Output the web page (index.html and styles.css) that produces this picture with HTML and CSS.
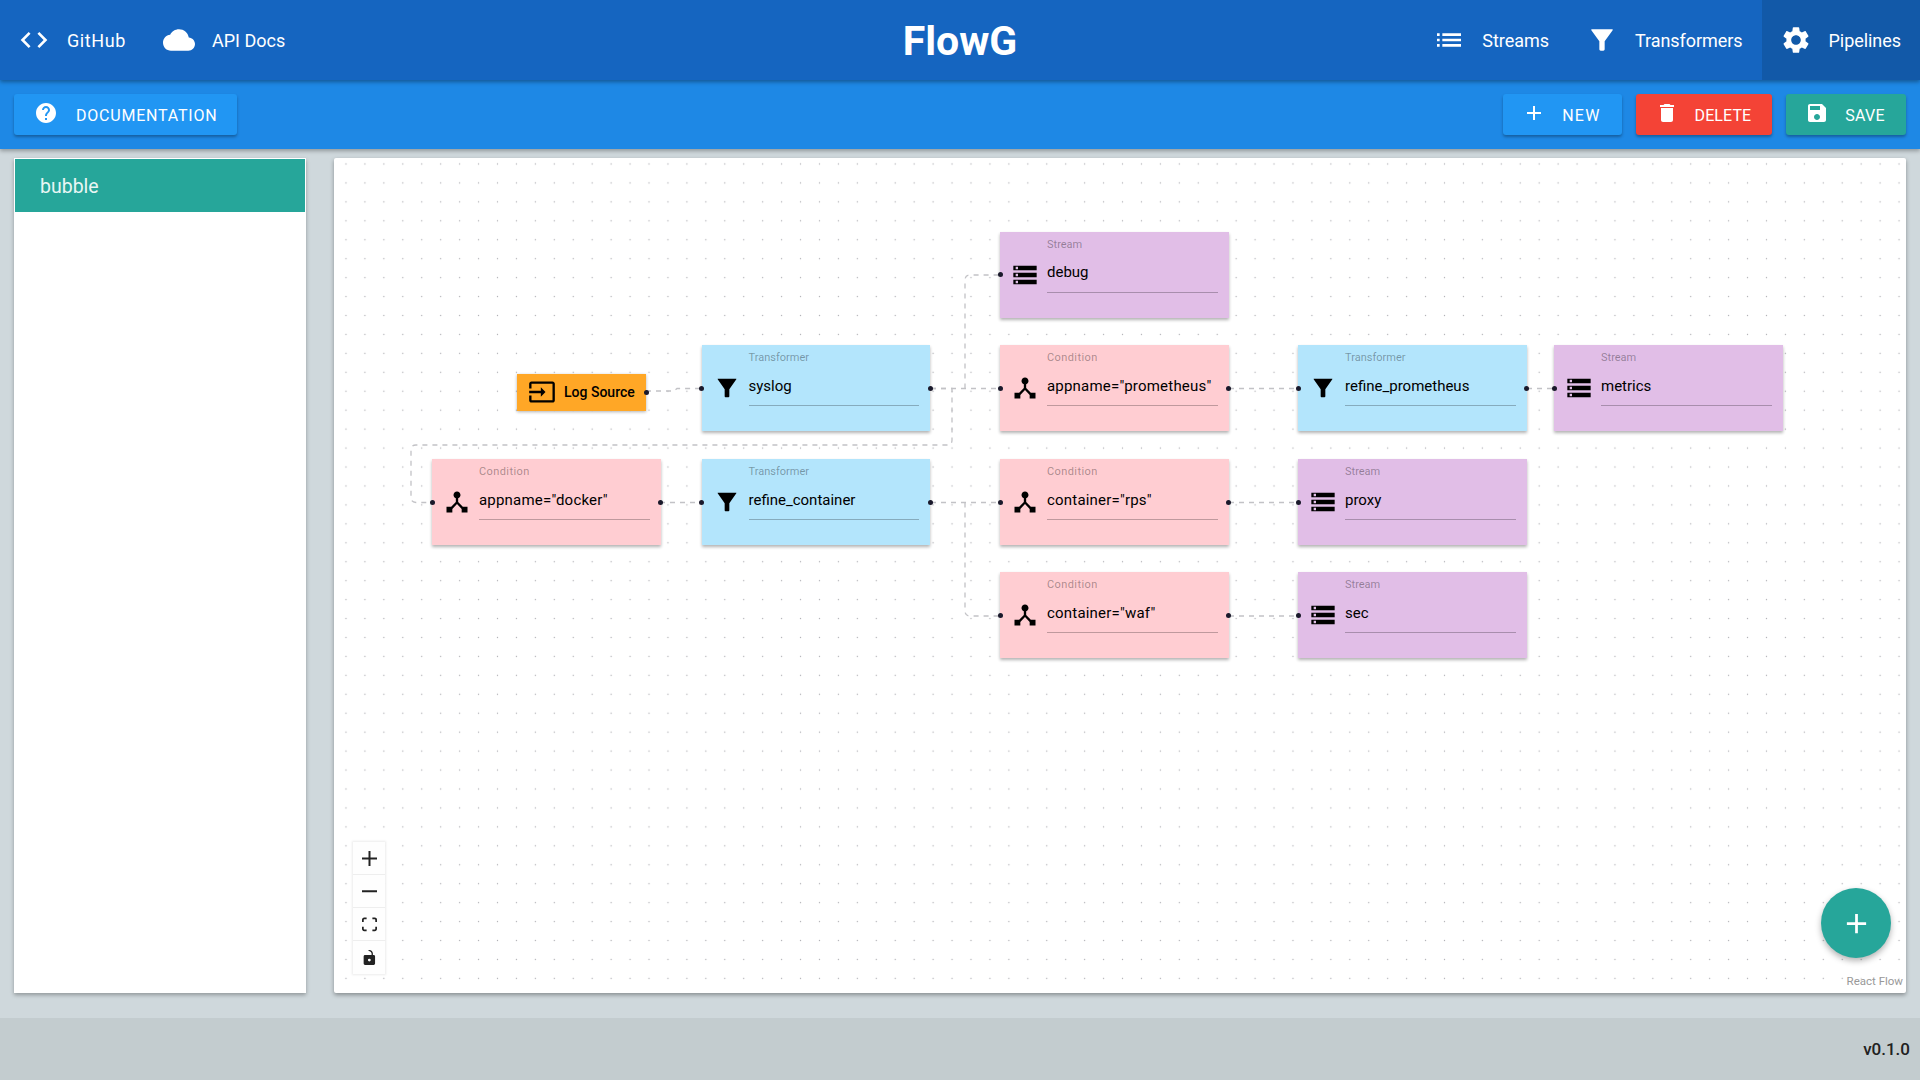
FILE: index.html
```html
<!DOCTYPE html>
<html lang="en">
<head>
  <meta charset="UTF-8" />
  <title>FlowG</title>
  <link rel="stylesheet" href="styles.css">
</head>
<body>
  <!-- icon sprite -->
  <svg class="sprite" xmlns="http://www.w3.org/2000/svg">
    <symbol id="i-code" viewBox="0 0 24 24"><path d="M9.4 16.6L4.8 12l4.6-4.6L8 6l-6 6 6 6 1.4-1.4zm5.2 0l4.6-4.6-4.6-4.6L16 6l6 6-6 6-1.4-1.4z"/></symbol>
    <symbol id="i-cloud" viewBox="0 0 24 24"><path d="M19.35 10.04C18.67 6.59 15.64 4 12 4 9.11 4 6.6 5.64 5.35 8.04 2.34 8.36 0 10.91 0 14c0 3.31 2.69 6 6 6h13c2.76 0 5-2.24 5-5 0-2.64-2.05-4.78-4.65-4.96z"/></symbol>
    <symbol id="i-list" viewBox="0 0 24 24"><path d="M3 13h2v-2H3v2zm0 4h2v-2H3v2zm0-8h2V7H3v2zm4 4h14v-2H7v2zm0 4h14v-2H7v2zM7 7v2h14V7H7z"/></symbol>
    <symbol id="i-filter" viewBox="0 0 24 24"><path d="M4 4h16v.6L14 13v6c0 .55-.45 1-1 1h-2c-.55 0-1-.45-1-1v-6L4 4.6z"/></symbol>
    <symbol id="i-gear" viewBox="0 0 24 24"><path d="M19.14 12.94c.04-.3.06-.61.06-.94 0-.32-.02-.64-.07-.94l2.03-1.58c.18-.14.23-.41.12-.61l-1.92-3.32c-.12-.22-.37-.29-.59-.22l-2.39.96c-.5-.38-1.03-.7-1.62-.94l-.36-2.54c-.04-.24-.24-.41-.48-.41h-3.84c-.24 0-.43.17-.47.41l-.36 2.54c-.59.24-1.13.57-1.62.94l-2.39-.96c-.22-.08-.47 0-.59.22L2.74 8.87c-.12.21-.08.47.12.61l2.03 1.58c-.05.3-.09.63-.09.94s.02.64.07.94l-2.03 1.58c-.18.14-.23.41-.12.61l1.92 3.32c.12.22.37.29.59.22l2.39-.96c.5.38 1.03.7 1.62.94l.36 2.54c.05.24.24.41.48.41h3.84c.24 0 .44-.17.47-.41l.36-2.54c.59-.24 1.13-.56 1.62-.94l2.39.96c.22.08.47 0 .59-.22l1.92-3.32c.12-.22.07-.47-.12-.61l-2.01-1.58zM12 15.6c-1.98 0-3.6-1.62-3.6-3.6s1.62-3.6 3.6-3.6 3.6 1.62 3.6 3.6-1.62 3.6-3.6 3.6z"/></symbol>
    <symbol id="i-help" viewBox="0 0 24 24"><path d="M12 2C6.48 2 2 6.48 2 12s4.48 10 10 10 10-4.48 10-10S17.52 2 12 2zm1 17h-2v-2h2v2zm2.07-7.75l-.9.92C13.45 12.9 13 13.5 13 15h-2v-.5c0-1.1.45-2.1 1.17-2.83l1.24-1.26c.37-.36.59-.86.59-1.41 0-1.1-.9-2-2-2s-2 .9-2 2H8c0-2.21 1.79-4 4-4s4 1.79 4 4c0 .88-.36 1.68-.93 2.25z"/></symbol>
    <symbol id="i-add" viewBox="0 0 24 24"><path d="M19 13h-6v6h-2v-6H5v-2h6V5h2v6h6v2z"/></symbol>
    <symbol id="i-delete" viewBox="0 0 24 24"><path d="M6 19c0 1.1.9 2 2 2h8c1.1 0 2-.9 2-2V7H6v12zM19 4h-3.5l-1-1h-5l-1 1H5v2h14V4z"/></symbol>
    <symbol id="i-save" viewBox="0 0 24 24"><path d="M17 3H5c-1.11 0-2 .9-2 2v14c0 1.1.89 2 2 2h14c1.1 0 2-.9 2-2V7l-4-4zm-5 16c-1.66 0-3-1.34-3-3s1.34-3 3-3 3 1.34 3 3-1.34 3-3 3zm3-10H5V5h10v4z"/></symbol>
    <symbol id="i-storage" viewBox="0 0 24 24"><path d="M2 20h20v-4H2v4zm2-3h2v2H4v-2zM2 4v4h20V4H2zm4 3H4V5h2v2zm-4 7h20v-4H2v4zm2-3h2v2H4v-2z"/></symbol>
    <symbol id="i-hub" viewBox="0 0 24 24"><path d="M17 16l-4-4V8.82C14.16 8.4 15 7.3 15 6c0-1.66-1.34-3-3-3S9 4.34 9 6c0 1.3.84 2.4 2 2.82V12l-4 4H3v5h5v-3.05l4-4.2 4 4.2V21h5v-5h-4z"/></symbol>
    <symbol id="i-input" viewBox="0 0 24 24"><path d="M21 3.01H3c-1.1 0-2 .9-2 2V9h2V4.99h18v14.03H3V15H1v4.01c0 1.1.9 1.98 2 1.98h18c1.1 0 2-.88 2-1.98v-14c0-1.11-.9-2-2-2zM11 16l4-4-4-4v3H1v2h10v3z"/></symbol>
    <symbol id="i-zoom-in" viewBox="0 0 32 32"><path d="M32 18.133H18.133V32h-4.266V18.133H0v-4.266h13.867V0h4.266v13.867H32z"/></symbol>
    <symbol id="i-zoom-out" viewBox="0 0 32 5"><path d="M0 0h32v4.2H0z"/></symbol>
    <symbol id="i-fit" viewBox="0 0 32 30"><path d="M3.692 4.63c0-.53.4-.938.939-.938h5.215V0H4.708C2.13 0 0 2.054 0 4.63v5.216h3.692V4.631zM27.354 0h-5.2v3.692h5.17c.53 0 .984.4.984.939v5.215H32V4.631A4.624 4.624 0 0027.354 0zm.954 24.83c0 .532-.4.94-.939.94h-5.215v3.768h5.215c2.577 0 4.631-2.13 4.631-4.707v-5.139h-3.692v5.139zm-23.677.94c-.531 0-.939-.4-.939-.94v-5.138H0v5.139c0 2.577 2.13 4.707 4.708 4.707h5.138V25.77H4.631z"/></symbol>
    <symbol id="i-unlock" viewBox="0 0 25 32"><path d="M21.333 10.667H19.81V7.619C19.81 3.429 16.38 0 12.19 0c-4.114 0-1.37 2.133.305 2.438 1.676.305 4.42 2.59 4.42 5.181v3.048H3.047A3.056 3.056 0 000 13.714v15.238A3.056 3.056 0 003.048 32h18.285a3.056 3.056 0 003.048-3.048V13.714a3.056 3.056 0 00-3.048-3.047zM12.19 24.533a3.056 3.056 0 01-3.047-3.047 3.056 3.056 0 013.047-3.048 3.056 3.056 0 013.048 3.048 3.056 3.056 0 01-3.048 3.047z"/></symbol>
  </svg>

  <header class="appbar">
    <nav class="nav">
      <a class="nav-item nav-github" href="#"><svg class="nav-icon"><use href="#i-code"/></svg>GitHub</a>
      <a class="nav-item" href="#"><svg class="nav-icon"><use href="#i-cloud"/></svg>API Docs</a>
    </nav>
    <h1 class="brand">FlowG</h1>
    <nav class="nav nav-right">
      <a class="nav-item" href="#"><svg class="nav-icon"><use href="#i-list"/></svg>Streams</a>
      <a class="nav-item" href="#"><svg class="nav-icon"><use href="#i-filter"/></svg>Transformers</a>
      <a class="nav-item active" href="#"><svg class="nav-icon"><use href="#i-gear"/></svg>Pipelines</a>
    </nav>
  </header>

  <div class="toolbar">
    <a class="btn btn-blue btn-doc" href="#"><svg class="btn-icon"><use href="#i-help"/></svg><span class="btn-label">Documentation</span></a>
    <div class="toolbar-actions">
      <a class="btn btn-blue btn-new" href="#"><svg class="btn-icon"><use href="#i-add"/></svg><span class="btn-label">New</span></a>
      <a class="btn btn-red btn-delete" href="#"><svg class="btn-icon"><use href="#i-delete"/></svg><span class="btn-label">Delete</span></a>
      <a class="btn btn-teal btn-save" href="#"><svg class="btn-icon"><use href="#i-save"/></svg><span class="btn-label">Save</span></a>
    </div>
  </div>

  <main class="workspace">
    <aside class="sidebar">
      <a class="sidebar-item selected" href="#">bubble</a>
    </aside>

    <section class="canvas">
      <svg class="edges" xmlns="http://www.w3.org/2000/svg">
        <defs>
          <pattern id="dots" x="2.5" y="-3.5" width="18.94" height="18.94" patternUnits="userSpaceOnUse">
            <circle cx="9.47" cy="9.47" r="0.7" fill="#b0b0b5"/>
          </pattern>
        </defs>
        <rect width="100%" height="100%" fill="url(#dots)"/>
        <g class="edge-lines">
          <path d="M312 233H340L343 230.5H368"/>
          <path d="M597 230.5H666"/>
          <path d="M631 230.5V122Q631 117 636 117H666"/>
          <path d="M597 230.5H618V282Q618 287 613 287H82Q77 287 77 292V339.5Q77 344.5 82 344.5H97"/>
          <path d="M326 344.5H368"/>
          <path d="M597 344.5H666"/>
          <path d="M631 344.5V453Q631 458 636 458H666"/>
          <path d="M895 230.5H964"/>
          <path d="M895 344.5H964"/>
          <path d="M895 458H964"/>
          <path d="M1193 230.5H1220"/>
        </g>
      </svg>

      <div class="node-source">
        <svg class="node-icon"><use href="#i-input"/></svg>
        <span>Log Source</span>
        <i class="handle handle-right"></i>
      </div>

      <div class="node stream col-3 row-1">
        <i class="handle handle-left"></i>
        <svg class="node-icon"><use href="#i-storage"/></svg>
        <div class="node-body"><div class="node-type">Stream</div><div class="node-name">debug</div></div>
      </div>

      <div class="node transformer col-2 row-2">
        <i class="handle handle-left"></i>
        <svg class="node-icon"><use href="#i-filter"/></svg>
        <div class="node-body"><div class="node-type">Transformer</div><div class="node-name">syslog</div></div>
        <i class="handle handle-right"></i>
      </div>
      <div class="node condition col-3 row-2">
        <i class="handle handle-left"></i>
        <svg class="node-icon"><use href="#i-hub"/></svg>
        <div class="node-body"><div class="node-type">Condition</div><div class="node-name">appname="prometheus"</div></div>
        <i class="handle handle-right"></i>
      </div>
      <div class="node transformer col-4 row-2">
        <i class="handle handle-left"></i>
        <svg class="node-icon"><use href="#i-filter"/></svg>
        <div class="node-body"><div class="node-type">Transformer</div><div class="node-name">refine_prometheus</div></div>
        <i class="handle handle-right"></i>
      </div>
      <div class="node stream col-5 row-2">
        <i class="handle handle-left"></i>
        <svg class="node-icon"><use href="#i-storage"/></svg>
        <div class="node-body"><div class="node-type">Stream</div><div class="node-name">metrics</div></div>
      </div>

      <div class="node condition col-1 row-3">
        <i class="handle handle-left"></i>
        <svg class="node-icon"><use href="#i-hub"/></svg>
        <div class="node-body"><div class="node-type">Condition</div><div class="node-name">appname="docker"</div></div>
        <i class="handle handle-right"></i>
      </div>
      <div class="node transformer col-2 row-3">
        <i class="handle handle-left"></i>
        <svg class="node-icon"><use href="#i-filter"/></svg>
        <div class="node-body"><div class="node-type">Transformer</div><div class="node-name">refine_container</div></div>
        <i class="handle handle-right"></i>
      </div>
      <div class="node condition col-3 row-3">
        <i class="handle handle-left"></i>
        <svg class="node-icon"><use href="#i-hub"/></svg>
        <div class="node-body"><div class="node-type">Condition</div><div class="node-name">container="rps"</div></div>
        <i class="handle handle-right"></i>
      </div>
      <div class="node stream col-4 row-3">
        <i class="handle handle-left"></i>
        <svg class="node-icon"><use href="#i-storage"/></svg>
        <div class="node-body"><div class="node-type">Stream</div><div class="node-name">proxy</div></div>
      </div>

      <div class="node condition col-3 row-4">
        <i class="handle handle-left"></i>
        <svg class="node-icon"><use href="#i-hub"/></svg>
        <div class="node-body"><div class="node-type">Condition</div><div class="node-name">container="waf"</div></div>
        <i class="handle handle-right"></i>
      </div>
      <div class="node stream col-4 row-4">
        <i class="handle handle-left"></i>
        <svg class="node-icon"><use href="#i-storage"/></svg>
        <div class="node-body"><div class="node-type">Stream</div><div class="node-name">sec</div></div>
      </div>

      <div class="controls">
        <button class="control"><svg class="control-icon"><use href="#i-zoom-in"/></svg></button>
        <button class="control"><svg class="control-icon"><use href="#i-zoom-out"/></svg></button>
        <button class="control"><svg class="control-icon"><use href="#i-fit"/></svg></button>
        <button class="control"><svg class="control-icon"><use href="#i-unlock"/></svg></button>
      </div>

      <button class="fab"><svg class="fab-icon"><use href="#i-add"/></svg></button>
      <a class="attribution" href="#">React Flow</a>
    </section>
  </main>

  <footer class="footer">v0.1.0</footer>
</body>
</html>
```

FILE: styles.css
```css
* {
  box-sizing: border-box;
}

body {
  margin: 0;
  height: 100vh;
  display: flex;
  flex-direction: column;
  overflow: hidden;
  background-color: #cfd8dc;
  color: #000;
  font-family: Roboto, "Liberation Sans", sans-serif;
}

a {
  color: inherit;
  text-decoration: none;
}

.sprite {
  display: none;
}

svg {
  fill: currentColor;
}

/* App bar */
.appbar {
  height: 80px;
  flex-shrink: 0;
  display: grid;
  grid-template-columns: 1fr auto 1fr;
  align-items: stretch;
  background-color: #1565c0;
  color: #fff;
  box-shadow: 0 2px 4px rgba(0, 0, 0, 0.35);
  position: relative;
  z-index: 3;
}

.nav {
  display: flex;
}

.nav-right {
  justify-content: flex-end;
  letter-spacing: -0.05px;
}

.nav-item {
  display: flex;
  align-items: center;
  gap: 17px;
  padding: 0 19px 0 18px;
  font-size: 18px;
}

.nav-github {
  letter-spacing: 0.6px;
}

.nav-item.active {
  background-color: #1259a8;
}

.nav-icon {
  width: 32px;
  height: 32px;
}

.brand {
  margin: 1px 0 0;
  align-self: center;
  font-size: 41px;
  font-weight: 700;
}

/* Toolbar */
.toolbar {
  height: 69px;
  flex-shrink: 0;
  display: flex;
  justify-content: space-between;
  align-items: center;
  padding: 0 14px;
  background-color: #1e88e5;
  box-shadow: 0 2px 4px rgba(0, 0, 0, 0.3);
  position: relative;
  z-index: 2;
}

.toolbar-actions {
  display: flex;
  gap: 14px;
}

.btn {
  height: 41px;
  display: flex;
  align-items: center;
  gap: 16px;
  padding: 0 21px 0 19px;
  border-radius: 3px;
  color: #fff;
  font-size: 16px;
  letter-spacing: 0.5px;
  text-transform: uppercase;
  box-shadow: 0 2px 3px rgba(0, 0, 0, 0.3);
}

.btn-label {
  margin-top: 1px;
}

.btn-doc {
  gap: 18px;
  padding: 0 20px;
  letter-spacing: 0.78px;
}

.btn-new {
  letter-spacing: 1.2px;
}

.btn-delete {
  letter-spacing: 0.1px;
}

.btn-save {
  letter-spacing: 0.3px;
}

.btn-blue {
  background-color: #2196f3;
}

.btn-red {
  background-color: #f44336;
}

.btn-teal {
  background-color: #26a69a;
}

.btn-icon {
  width: 24px;
  height: 24px;
  margin-top: -3px;
}

/* Workspace */
.workspace {
  flex: 1;
  display: flex;
  gap: 28px;
  padding: 9px 14px 25px;
  min-height: 0;
}

.sidebar {
  width: 292px;
  flex-shrink: 0;
  padding: 1px;
  background-color: #fff;
  box-shadow: 0 2px 4px rgba(0, 0, 0, 0.3);
}

.sidebar-item {
  display: flex;
  align-items: center;
  height: 53px;
  padding: 1px 0 0 25px;
  background-color: #26a69a;
  color: #e8f6f4;
  font-size: 19.5px;
}

.canvas {
  flex: 1;
  position: relative;
  background-color: #fff;
  box-shadow: 0 2px 4px rgba(0, 0, 0, 0.35);
  border-radius: 2px;
  overflow: hidden;
}

.edges {
  position: absolute;
  top: 0;
  left: 0;
  width: 100%;
  height: 100%;
}

.edge-lines path {
  fill: none;
  stroke: #c2c2c6;
  stroke-width: 1.3;
  stroke-dasharray: 5;
}

/* Flow nodes */
.node {
  position: absolute;
  width: 228.5px;
  height: 86px;
  display: flex;
  gap: 8px;
  padding: 0 11px;
  box-shadow: 0 2px 3px rgba(0, 0, 0, 0.3);
}

.node.stream {
  background-color: #e1bee7;
}

.node.condition {
  background-color: #ffcdd2;
}

.node.transformer {
  background-color: #b3e5fc;
}

.col-1 { left: 98px; }
.col-2 { left: 367.5px; }
.col-3 { left: 666px; }
.col-4 { left: 964px; }
.col-5 { left: 1220px; }

.row-1 { top: 73.5px; }
.row-2 { top: 187px; }
.row-3 { top: 301px; }
.row-4 { top: 414px; }

.node-icon {
  width: 28px;
  height: 28px;
  flex-shrink: 0;
  margin-top: 29px;
}

.node-body {
  flex: 1;
  height: 61px;
  border-bottom: 1px solid rgba(0, 0, 0, 0.25);
}

.node-type {
  margin-top: 6px;
  font-size: 11px;
  line-height: 14px;
  color: rgba(0, 0, 0, 0.35);
}

.node-name {
  margin-top: 10.5px;
  font-size: 15px;
  line-height: 20px;
}

.condition .node-type {
  letter-spacing: 0.4px;
}

.condition .node-name {
  letter-spacing: 0.2px;
}

.node-source {
  position: absolute;
  left: 183px;
  top: 215.5px;
  height: 37px;
  width: 129px;
  display: flex;
  align-items: center;
  gap: 8px;
  padding-left: 11px;
  background-color: #ffa726;
  font-size: 14px;
  font-weight: 500;
  box-shadow: 0 1px 3px rgba(0, 0, 0, 0.3);
}

.node-source .node-icon {
  margin-top: 0;
}

.handle {
  position: absolute;
  top: 50%;
  width: 5px;
  height: 5px;
  margin-top: -2.5px;
  border-radius: 50%;
  background-color: #1a192b;
}

.handle-left {
  left: -2.5px;
}

.handle-right {
  right: -2.5px;
}

/* Canvas overlays */
.controls {
  position: absolute;
  left: 19px;
  bottom: 19px;
  display: flex;
  flex-direction: column;
  box-shadow: 0 0 2px 1px rgba(0, 0, 0, 0.08);
}

.control {
  width: 32px;
  height: 33px;
  display: flex;
  align-items: center;
  justify-content: center;
  padding: 0;
  border: none;
  border-bottom: 1px solid #eee;
  background-color: #fefefe;
  color: #222;
}

.control:last-child {
  border-bottom: none;
}

.control-icon {
  width: 15px;
  height: 15px;
}

.fab {
  position: absolute;
  right: 15px;
  bottom: 35px;
  width: 70px;
  height: 70px;
  display: flex;
  align-items: center;
  justify-content: center;
  padding: 0;
  border: none;
  border-radius: 50%;
  background-color: #26a69a;
  color: #fff;
  box-shadow: 0 3px 6px rgba(0, 0, 0, 0.3);
}

.fab-icon {
  width: 33px;
  height: 33px;
}

.attribution {
  position: absolute;
  right: 3px;
  bottom: 5px;
  font-size: 11.5px;
  color: #999;
  background-color: rgba(255, 255, 255, 0.5);
}

/* Footer */
.footer {
  height: 62px;
  flex-shrink: 0;
  display: flex;
  align-items: center;
  justify-content: flex-end;
  padding-right: 10px;
  background-color: #c3cccf;
  color: #212121;
  font-size: 17px;
  font-weight: 500;
}
```
